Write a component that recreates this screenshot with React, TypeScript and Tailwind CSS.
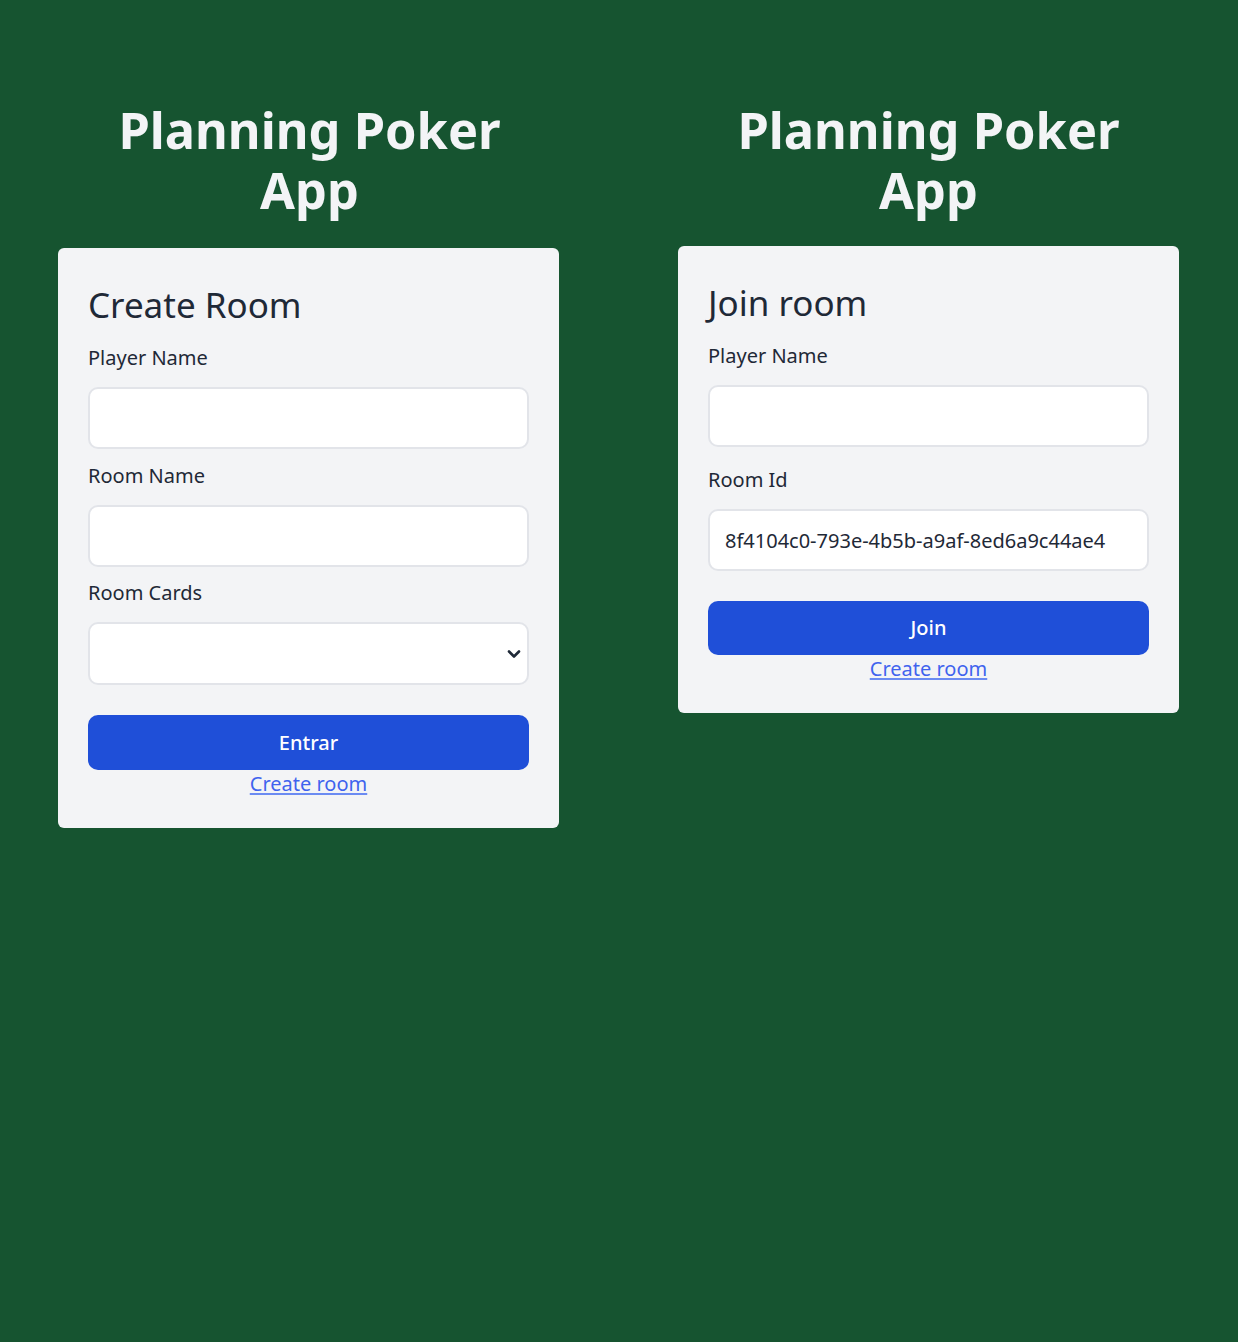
import React from "react";

const font = { fontFamily: '"Noto Sans", "Open Sans", sans-serif' };

function Label({ children }: { children: React.ReactNode }) {
  return <label className="block text-[20px] leading-[28px] text-[#1f2937]">{children}</label>;
}

function TextInput({ value }: { value?: string }) {
  return (
    <input
      type="text"
      defaultValue={value}
      className="mt-[15px] block h-[62px] w-full rounded-[10px] border-2 border-[#e2e4e9] bg-white px-[15px] text-[20px] text-[#1f2937] outline-none"
      style={font}
    />
  );
}

function Title() {
  return (
    <h1 className="mx-auto w-[440px] text-center text-[50.5px] font-bold leading-[60px] text-[#f3f4f6]">
      Planning Poker App
    </h1>
  );
}

function Chevron() {
  return (
    <svg
      className="pointer-events-none absolute right-[8px] top-1/2 -translate-y-1/2"
      width="14"
      height="9"
      viewBox="0 0 14 9"
      fill="none"
    >
      <path d="M2 2 L7 7 L12 2" stroke="#1f2937" strokeWidth="2.6" strokeLinecap="round" strokeLinejoin="round" />
    </svg>
  );
}

export default function App() {
  return (
    <div className="min-h-[1342px] w-full bg-[#165430]" style={font}>
      <div className="grid grid-cols-2 pt-[100px]">
        <div className="flex flex-col items-center">
          <Title />
          <div className="mr-[2px] mt-[28px] w-[501px] rounded-md bg-[#f3f4f6] px-[30px] pb-[30px] pt-[35px]">
            <h2 className="mb-[17px] text-[35px] leading-[44px] text-[#1f2937]">Create Room</h2>
            <div>
              <Label>Player Name</Label>
              <TextInput />
            </div>
            <div className="mt-[13px]">
              <Label>Room Name</Label>
              <TextInput />
            </div>
            <div className="mt-[12px]">
              <Label>Room Cards</Label>
              <div className="relative mt-[15px]">
                <select
                  className="block h-[63px] w-full appearance-none rounded-[10px] border-2 border-[#e2e4e9] bg-white px-[15px] text-[20px] outline-none"
                  style={font}
                  defaultValue=""
                >
                  <option value=""></option>
                </select>
                <Chevron />
              </div>
            </div>
            <button
              className="mt-[30px] block h-[55px] w-full rounded-[10px] bg-[#1f4fd8] text-[20px] font-medium text-white"
              style={font}
            >
              Entrar
            </button>
            <div className="text-center text-[20px] leading-[28px]">
              <a href="#" className="text-[#3f63ee] underline decoration-[#6b8bf2] underline-offset-2">
                Create room
              </a>
            </div>
          </div>
        </div>

        <div className="flex flex-col items-center">
          <Title />
          <div className="mt-[26px] w-[501px] rounded-md bg-[#f3f4f6] px-[30px] pb-[30px] pt-[35px]">
            <h2 className="mb-[17px] text-[35px] leading-[44px] text-[#1f2937]">Join room</h2>
            <div>
              <Label>Player Name</Label>
              <TextInput />
            </div>
            <div className="mt-[19px]">
              <Label>Room Id</Label>
              <TextInput value="8f4104c0-793e-4b5b-a9af-8ed6a9c44ae4" />
            </div>
            <button
              className="mt-[30px] block h-[54px] w-full rounded-[10px] bg-[#1f4fd8] text-[20px] font-medium text-white"
              style={font}
            >
              Join
            </button>
            <div className="text-center text-[20px] leading-[28px]">
              <a href="#" className="text-[#3f63ee] underline decoration-[#6b8bf2] underline-offset-2">
                Create room
              </a>
            </div>
          </div>
        </div>
      </div>
    </div>
  );
}
